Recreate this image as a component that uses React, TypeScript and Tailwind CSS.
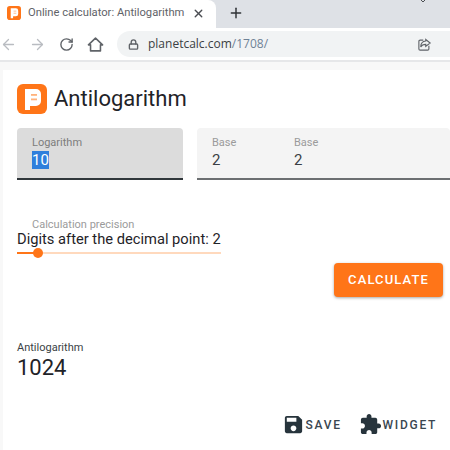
import { ArrowLeft, ArrowRight, Lock, Plus, RotateCw, X, ChevronDown } from 'lucide-react';

const roboto = "font-['Roboto',sans-serif]";

function Logo({ size, className }: { size: number; className?: string }) {
  return (
    <svg width={size} height={size} viewBox="0 0 30 30" className={className}>
      <rect width="30" height="30" rx="6" fill="#ff7518" />
      <path d="M8 26V5h11a5 5 0 0 1 5 5v7a5 5 0 0 1-5 5h-6v4z" fill="#fff" />
      <rect x="14" y="10" width="6" height="1.800" fill="#ffb27c" />
      <rect x="14" y="14.500" width="6" height="1.800" fill="#ffb27c" />
    </svg>
  );
}

function Field({ label, value }: { label: string; value: string }) {
  return (
    <div className="flex flex-col w-[82px]">
      <span className="text-[11px] leading-[14px] text-[#9b9b9b]">{label}</span>
      <span className="text-[15px] leading-[20px] text-[#3a3f44]">{value}</span>
    </div>
  );
}

export default function App() {
  return (
    <div className={`w-[450px] h-[450px] overflow-hidden bg-white flex flex-col ${roboto}`}>
      {/* browser tabs */}
      <div className="h-[28px] shrink-0 bg-[#dee1e6] flex items-center relative">
        <div className="w-[216px] h-full bg-white rounded-tr-lg flex items-center pl-[7px] pb-[2px]">
          <Logo size={14} />
          <span className="ml-[7px] w-[160px] text-[11.2px] text-[#5f6368] whitespace-nowrap">
            Online calculator: Antilogarithm
          </span>
          <X size={13} strokeWidth={2.5} className="text-[#4a4d52] ml-[4px]" />
        </div>
        <Plus size={16} strokeWidth={2.2} className="text-[#2f3236] ml-[12px] mb-[2px]" />
        <ChevronDown size={16} strokeWidth={1.5} className="absolute left-[415px] top-[-8px] text-[#4a4d52]" />
      </div>

      {/* browser toolbar */}
      <div className="h-[34px] shrink-0 bg-white flex items-center border-b-2 border-[#e6e7e9]">
        <ArrowLeft size={17} strokeWidth={1.8} className="text-[#b9bcc1]" />
        <ArrowRight size={17} strokeWidth={1.8} className="ml-[12px] text-[#b9bcc1]" />
        <RotateCw size={15} strokeWidth={2.2} className="ml-[13px] text-[#5f6368]" />
        <svg width="17" height="17" viewBox="0 0 24 24" fill="none" stroke="#5f6368" strokeWidth="2.200" strokeLinejoin="round" className="ml-[13px]">
          <path d="M2 12.500L12 3l10 9.500h-3V21H5v-8.500z" />
        </svg>
        <div className="ml-[13px] flex-1 h-[26px] bg-[#f1f3f4] rounded-l-full flex items-center pl-[11px]">
          <Lock size={11} strokeWidth={3} className="text-[#5f6368]" />
          <span className="ml-[9px] text-[12px] text-[#3c4043] font-['Open_Sans',sans-serif]">
            planetcalc.com<span className="text-[#6f8296]">/1708/</span>
          </span>
          <svg width="15" height="15" viewBox="0 0 24 24" fill="none" stroke="#5f6368" strokeWidth="1.8" className="ml-auto mr-[18px]">
            <path d="M10 5H5a2 2 0 0 0-2 2v12a2 2 0 0 0 2 2h12a2 2 0 0 0 2-2v-5" />
            <path d="M14 4l7 5.500-7 5.500v-3.200c-4 0-6.500 1.200-8 4.200 0-5 3-9 8-9.500z" />
          </svg>
        </div>
      </div>

      {/* page */}
      <div className="flex-1 bg-[#f8f8f8] pt-[8px] pl-[3px] min-h-0">
        <div className="h-full bg-white pl-[14px] pt-[14px] pr-[7px] flex flex-col">
          <div className="flex items-center">
            <Logo size={30} />
            <h1 className="ml-[7px] text-[22px] leading-[30px] text-[#1f2328]">Antilogarithm</h1>
          </div>

          <div className="flex gap-[14px] mt-[14px] mr-[-7px]">
            <div className="w-[166px] h-[52px] bg-[#dcdcdc] rounded-t border-b-2 border-[#30373b] pl-[15px] pt-[8px]">
              <div className="text-[11px] leading-[14px] text-[#7d7d7d]">Logarithm</div>
              <div className="text-[15px] leading-[20px] text-[#3a3f44]">
                <span className="bg-[#2f7fdc] text-white">10</span>
              </div>
            </div>
            <div className="flex-1 h-[52px] bg-[#f4f4f4] rounded-t border-b-2 border-[#6c6f71] pl-[15px] pt-[8px] flex">
              <Field label="Base" value="2" />
              <Field label="Base" value="2" />
            </div>
          </div>

          <div className="w-[204px] mt-[38px]">
            <div className="pl-[15px] text-[11px] leading-[13px] text-[#9b9b9b]">Calculation precision</div>
            <div className="text-[14.7px] leading-[16px] whitespace-nowrap text-[#1f2328]">Digits after the decimal point: 2</div>
            <div className="relative h-[10px] mt-[1px] flex items-center">
              <div className="h-[2px] w-[21px] bg-[#ff7518]" />
              <div className="h-[2px] flex-1 bg-[#ffd9bd]" />
              <div className="absolute left-[16px] top-0 w-[10px] h-[10px] rounded-full bg-[#ff7518]" />
            </div>
          </div>

          <div className="flex justify-end mt-[5px]">
            <button className="w-[109px] h-[34px] rounded bg-[#ff7518] text-white text-[13px] font-medium tracking-[1.1px] shadow-[0_1px_3px_rgba(0,0,0,0.35)]">
              CALCULATE
            </button>
          </div>

          <div className="mt-[44px] text-[11px] leading-[14px] text-[#3a3f44]">Antilogarithm</div>
          <div className="text-[22px] leading-[26px] text-[#1f2328]">1024</div>

          <div className="flex justify-end items-center mt-[32px] pr-[6px] text-xs font-medium tracking-[1.7px] text-[#3a4650]">
            <svg width="23" height="23" viewBox="0 0 24 24" fill="#27343c">
              <path d="M17 3H5c-1.110 0-2 .9-2 2v14c0 1.100.89 2 2 2h14c1.100 0 2-.9 2-2V7l-4-4zm-5 16c-1.660 0-3-1.340-3-3s1.340-3 3-3 3 1.340 3 3-1.340 3-3 3zm3-10H5V5h10v4z" />
            </svg>
            <span className="ml-[1px]">SAVE</span>
            <svg width="23" height="23" viewBox="0 0 24 24" fill="#27343c" className="ml-[17px]">
              <path d="M20.500 11H19V7c0-1.100-.9-2-2-2h-4V3.500C13 2.120 11.880 1 10.500 1S8 2.120 8 3.500V5H4c-1.100 0-1.990.9-1.990 2v3.800H3.500c1.490 0 2.700 1.210 2.700 2.700s-1.210 2.700-2.700 2.700H2V20c0 1.100.9 2 2 2h3.800v-1.500c0-1.490 1.210-2.700 2.700-2.700 1.490 0 2.700 1.210 2.700 2.700V22H17c1.100 0 2-.9 2-2v-4h1.500c1.380 0 2.500-1.120 2.500-2.500S21.880 11 20.500 11z" />
            </svg>
            <span className="ml-[1px]">WIDGET</span>
          </div>
        </div>
      </div>
    </div>
  );
}
